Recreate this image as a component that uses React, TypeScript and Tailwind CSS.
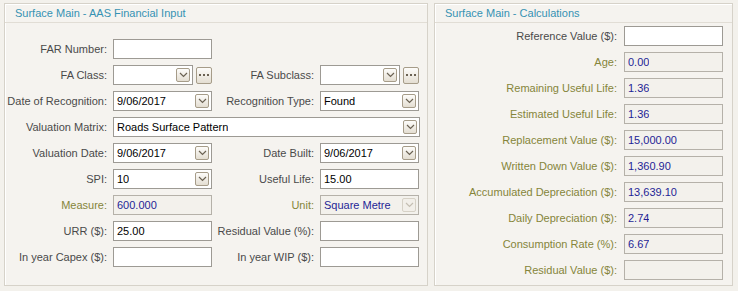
import type { ReactNode } from "react"

function Chevron({ faded }: { faded?: boolean }) {
  return (
    <svg width="9" height="6" viewBox="0 0 9 6" fill="none">
      <path d="M1 1l3.5 3.5L8 1" stroke={faded ? "#c4beb2" : "#6b6253"} strokeWidth="1.2" />
    </svg>
  )
}

function DropBtn({ faded }: { faded?: boolean }) {
  return (
    <span
      className={`flex h-[14px] w-[14px] items-center justify-center rounded-[2px] border ${
        faded ? "border-[#d6d1c6] bg-[#f2efe9]" : "border-[#a69c89] bg-gradient-to-b from-[#fdfcfa] to-[#e4ded2]"
      }`}
    >
      <Chevron faded={faded} />
    </span>
  )
}

function Box({
  value,
  w,
  readOnly,
  drop,
  faded,
}: {
  value?: string
  w: string
  readOnly?: boolean
  drop?: boolean
  faded?: boolean
}) {
  return (
    <div
      className={`flex h-[20px] items-center justify-between border pl-[3px] pr-[2px] ${w} ${
        readOnly ? "border-[#b5b1a9] bg-[#f3f1ec] text-[#1f1f96]" : "border-[#9d9a94] bg-white text-black"
      }`}
    >
      <span className="truncate">{value}</span>
      {drop && <DropBtn faded={faded} />}
    </div>
  )
}

function Dots() {
  return (
    <span className="ml-[3px] flex h-[17px] w-[16px] items-center justify-center gap-[2px] rounded-[2px] border border-[#a69c89] bg-gradient-to-b from-[#fdfcfa] to-[#e4ded2]">
      <span className="h-[2px] w-[2px] bg-[#6b6253]" />
      <span className="h-[2px] w-[2px] bg-[#6b6253]" />
      <span className="h-[2px] w-[2px] bg-[#6b6253]" />
    </span>
  )
}

function Label({ children, w, olive }: { children: ReactNode; w: string; olive?: boolean }) {
  return (
    <span className={`${w} shrink-0 text-right ${olive ? "text-[#85853a]" : "text-[#4a4a4a]"}`}>{children}</span>
  )
}

function Row({ children }: { children: ReactNode }) {
  return <div className="flex h-[20px] items-center">{children}</div>
}

function Panel({ title, w, children, pt }: { title: string; w: string; children: ReactNode; pt: string }) {
  return (
    <div className={`${w} h-[283px] border border-[#d6d2c9] bg-[#f5f3ef] shadow-[inset_1px_1px_0_#ffffff]`}>
      <div className="flex h-[19px] items-center border-b border-[#e1ddd5] pl-[10px] text-[#3592b3]">{title}</div>
      <div className={`flex flex-col gap-[6px] ${pt}`}>{children}</div>
    </div>
  )
}

export default function App() {
  const calc: [string, string | undefined, boolean][] = [
    ["Age:", "0.00", true],
    ["Remaining Useful Life:", "1.36", true],
    ["Estimated Useful Life:", "1.36", true],
    ["Replacement Value ($):", "15,000.00", true],
    ["Written Down Value ($):", "1,360.90", true],
    ["Accumulated Depreciation ($):", "13,639.10", true],
    ["Daily Depreciation ($):", "2.74", true],
    ["Consumption Rate (%):", "6.67", true],
    ["Residual Value ($):", undefined, true],
  ]

  return (
    <div className="flex h-[291px] w-[738px] gap-[6px] bg-[#f3f1ec] pl-[4px] pt-[3px] font-[Liberation_Sans,Arial,sans-serif] text-[11px] leading-none">
      <Panel title="Surface Main - AAS Financial Input" w="w-[424px]" pt="pt-[16px]">
        <Row>
          <Label w="w-[102px]">FAR Number:</Label>
          <span className="w-[6px]" />
          <Box w="w-[99px]" />
        </Row>
        <Row>
          <Label w="w-[102px]">FA Class:</Label>
          <span className="w-[6px]" />
          <Box w="w-[80px]" drop />
          <Dots />
          <Label w="w-[102px]">FA Subclass:</Label>
          <span className="w-[6px]" />
          <Box w="w-[80px]" drop />
          <Dots />
        </Row>
        <Row>
          <Label w="w-[102px]">Date of Recognition:</Label>
          <span className="w-[6px]" />
          <Box w="w-[99px]" value="9/06/2017" drop />
          <Label w="w-[102px]">Recognition Type:</Label>
          <span className="w-[6px]" />
          <Box w="w-[99px]" value="Found" drop />
        </Row>
        <Row>
          <Label w="w-[102px]">Valuation Matrix:</Label>
          <span className="w-[6px]" />
          <Box w="w-[307px]" value="Roads Surface Pattern" drop />
        </Row>
        <Row>
          <Label w="w-[102px]">Valuation Date:</Label>
          <span className="w-[6px]" />
          <Box w="w-[99px]" value="9/06/2017" drop />
          <Label w="w-[102px]">Date Built:</Label>
          <span className="w-[6px]" />
          <Box w="w-[99px]" value="9/06/2017" drop />
        </Row>
        <Row>
          <Label w="w-[102px]">SPI:</Label>
          <span className="w-[6px]" />
          <Box w="w-[99px]" value="10" drop />
          <Label w="w-[102px]">Useful Life:</Label>
          <span className="w-[6px]" />
          <Box w="w-[99px]" value="15.00" />
        </Row>
        <Row>
          <Label w="w-[102px]" olive>
            Measure:
          </Label>
          <span className="w-[6px]" />
          <Box w="w-[99px]" value="600.000" readOnly />
          <Label w="w-[102px]" olive>
            Unit:
          </Label>
          <span className="w-[6px]" />
          <Box w="w-[99px]" value="Square Metre" readOnly drop faded />
        </Row>
        <Row>
          <Label w="w-[102px]">URR ($):</Label>
          <span className="w-[6px]" />
          <Box w="w-[99px]" value="25.00" />
          <Label w="w-[102px]">Residual Value (%):</Label>
          <span className="w-[6px]" />
          <Box w="w-[99px]" />
        </Row>
        <Row>
          <Label w="w-[102px]">In year Capex ($):</Label>
          <span className="w-[6px]" />
          <Box w="w-[99px]" />
          <Label w="w-[102px]">In year WIP ($):</Label>
          <span className="w-[6px]" />
          <Box w="w-[99px]" />
        </Row>
      </Panel>

      <Panel title="Surface Main - Calculations" w="w-[299px]" pt="pt-[3px]">
        <Row>
          <Label w="w-[182px]">Reference Value ($):</Label>
          <span className="w-[7px]" />
          <Box w="w-[99px]" />
        </Row>
        {calc.map(([label, value]) => (
          <Row key={label}>
            <Label w="w-[182px]" olive>
              {label}
            </Label>
            <span className="w-[7px]" />
            <Box w="w-[99px]" value={value} readOnly />
          </Row>
        ))}
      </Panel>
    </div>
  )
}
